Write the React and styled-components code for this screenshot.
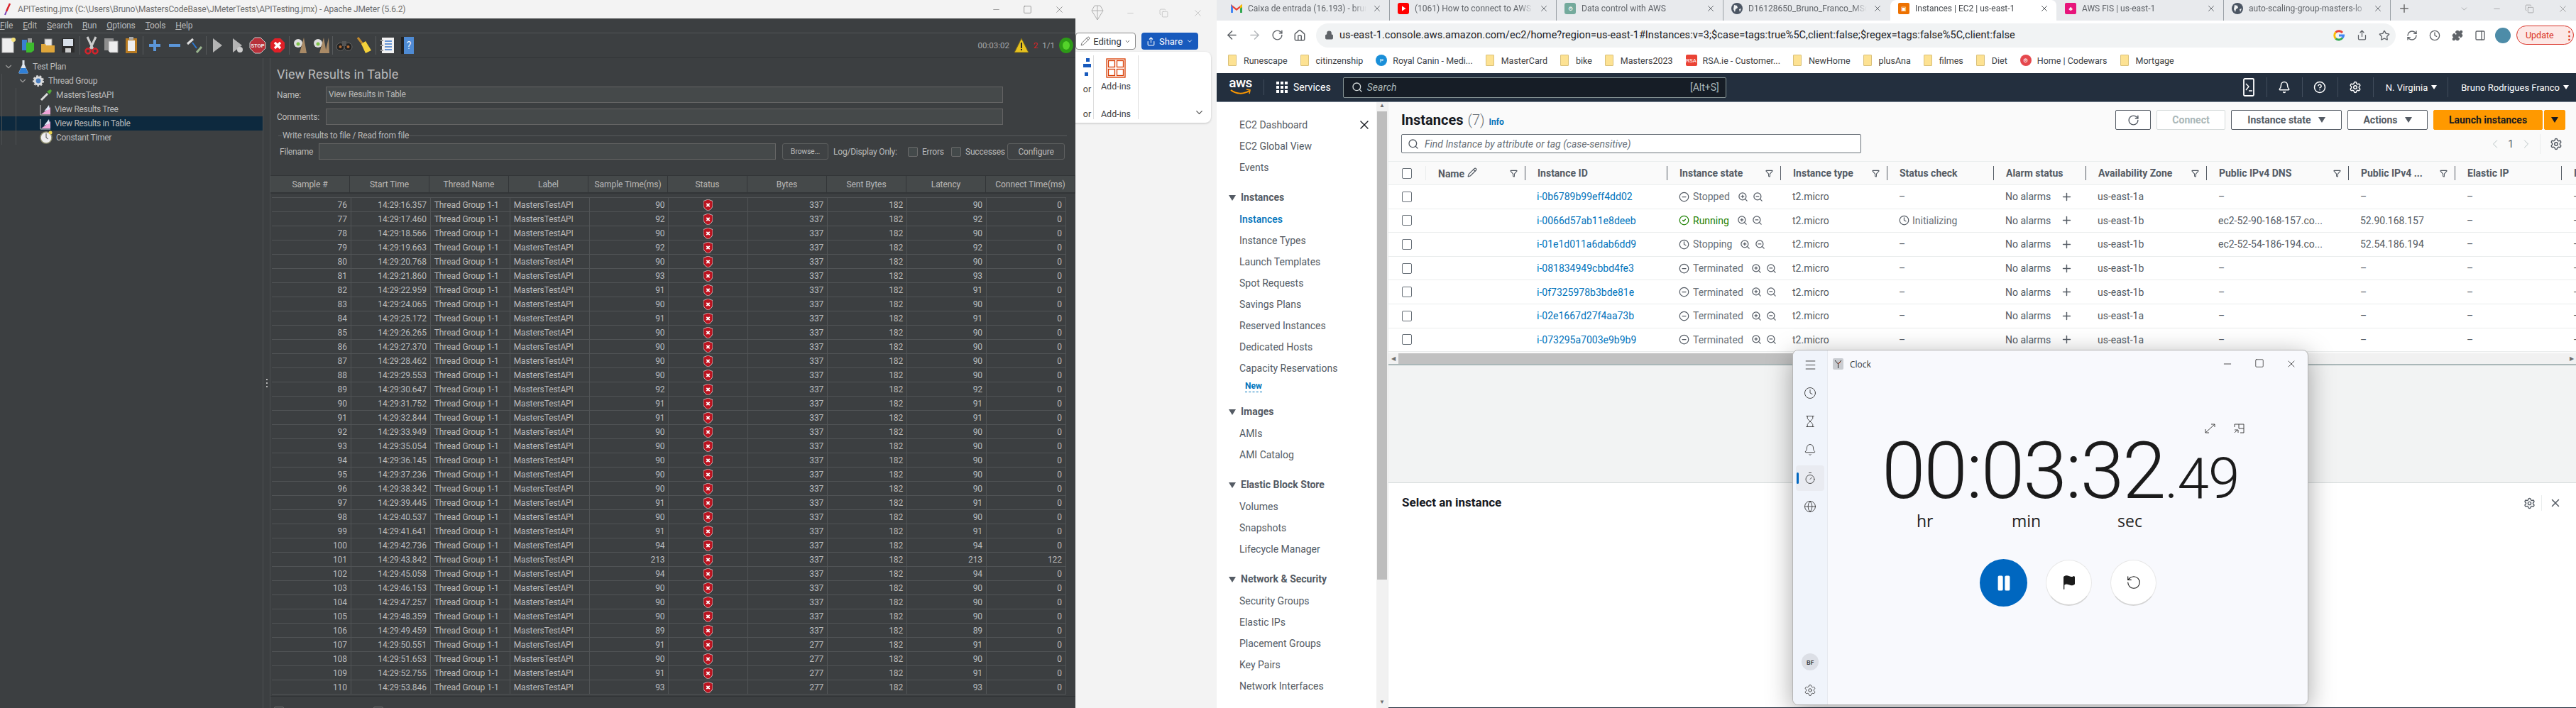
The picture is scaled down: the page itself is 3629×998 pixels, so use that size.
import styled, { createGlobalStyle } from "styled-components";
import {
  ArrowLeft, ArrowRight, RotateCw, House, Lock, Share, Star, Puzzle, Plus, X, Minus, Square,
  ChevronDown, Search, Bell, CircleHelp, Settings, RefreshCw, ChevronLeft, ChevronRight,
  CircleMinus, CircleCheck, Clock, ZoomIn, ZoomOut, Pencil, Menu, Hourglass, Timer, Globe,
  Flag, Pause, RotateCcw, Copy, PanelRight, Filter,
} from "lucide-react";

const GlobalStyle = createGlobalStyle`
  html, body { margin: 0; padding: 0; background: #fff; }
  * { box-sizing: border-box; }
`;

/* ---------- data ---------- */
const samples = [
  ["16.357", 90], ["17.460", 92], ["18.566", 90], ["19.663", 92], ["20.768", 90], ["21.860", 93], ["22.959", 91],
  ["24.065", 90], ["25.172", 91], ["26.265", 90], ["27.370", 90], ["28.462", 90], ["29.553", 90], ["30.647", 92],
  ["31.752", 91], ["32.844", 91], ["33.949", 90], ["35.054", 90], ["36.145", 90], ["37.236", 90], ["38.342", 90],
  ["39.445", 91], ["40.537", 90], ["41.641", 91], ["42.736", 94], ["43.842", 213], ["45.058", 94], ["46.153", 90],
  ["47.257", 90], ["48.359", 90], ["49.459", 89], ["50.551", 91], ["51.653", 90], ["52.755", 91], ["53.846", 93],
];
const jmeterCols = ["Sample #", "Start Time", "Thread Name", "Label", "Sample Time(ms)", "Status", "Bytes", "Sent Bytes", "Latency", "Connect Time(ms)"];
const instances = [
  { id: "i-0b6789b99eff4dd02", state: "Stopped", az: "1a", dns: "–", ip: "–", check: "–" },
  { id: "i-0066d57ab11e8deeb", state: "Running", az: "1b", dns: "ec2-52-90-168-157.co...", ip: "52.90.168.157", check: "Initializing" },
  { id: "i-01e1d011a6dab6dd9", state: "Stopping", az: "1b", dns: "ec2-52-54-186-194.co...", ip: "52.54.186.194", check: "–" },
  { id: "i-081834949cbbd4fe3", state: "Terminated", az: "1b", dns: "–", ip: "–", check: "–" },
  { id: "i-0f7325978b3bde81e", state: "Terminated", az: "1b", dns: "–", ip: "–", check: "–" },
  { id: "i-02e1667d27f4aa73b", state: "Terminated", az: "1a", dns: "–", ip: "–", check: "–" },
  { id: "i-073295a7003e9b9b9", state: "Terminated", az: "1a", dns: "–", ip: "–", check: "–" },
];
const awsCols = "52px 140px 200px 160px 150px 150px 130px 170px 200px 150px 150px 22px";
const navSections = [
  { title: "Instances", items: ["Instances", "Instance Types", "Launch Templates", "Spot Requests", "Savings Plans", "Reserved Instances", "Dedicated Hosts", "Capacity Reservations"] },
  { title: "Images", items: ["AMIs", "AMI Catalog"] },
  { title: "Elastic Block Store", items: ["Volumes", "Snapshots", "Lifecycle Manager"] },
  { title: "Network & Security", items: ["Security Groups", "Elastic IPs", "Placement Groups", "Key Pairs", "Network Interfaces"] },
];

/* ---------- desktop ---------- */
const Desktop = styled.div`
  position: relative;
  width: 3629px;
  height: 998px;
  overflow: hidden;
  background: #f3f3f3;
  font-family: Roboto, "Liberation Sans", sans-serif;
`;
const WindowFrame = styled.div`
  position: absolute;
  left: ${(p) => p.$left}px;
  top: ${(p) => p.$top || 0}px;
  width: ${(p) => p.$width}px;
  height: ${(p) => p.$height || 998}px;
  display: flex;
  flex-direction: column;
  overflow: hidden;
`;

/* ---------- jmeter ---------- */
const JTitleBar = styled.div`
  height: 26px;
  flex: none;
  background: #f3f3f3;
  display: flex;
  align-items: center;
  padding-left: 6px;
  color: #6f6f6f;
  font-size: 12px;
`;
const JTitleText = styled.span`
  margin-left: 9px;
  flex: 1;
  letter-spacing: -0.17px;
`;
const WinControls = styled.div`
  display: flex;
  align-items: center;
  color: ${(p) => p.$color || "#555"};
  gap: ${(p) => p.$gap || 30}px;
  margin-left: ${(p) => p.$push || 0};
  padding-right: ${(p) => p.$right || 16}px;
`;
const JMenuBar = styled.div`
  height: 21px;
  flex: none;
  background: #3c3f41;
  border-bottom: 1px solid #515658;
  display: flex;
  align-items: center;
  gap: 14px;
  color: #bbbbbb;
  font-size: 12px;
  letter-spacing: -0.15px;
`;
const JMenuItem = styled.span`
  display: inline-block;
  &::first-letter { text-decoration: underline; }
`;
const JToolbar = styled.div`
  height: 35px;
  flex: none;
  background: #3c3f41;
  border-bottom: 1px solid #323537;
  display: flex;
  align-items: center;
`;
const ToolSlot = styled.div`
  width: 28px;
  height: 26px;
  display: flex;
  align-items: center;
  justify-content: center;
  flex: none;
  &:first-child { margin-left: -2px; }
`;
const ToolSep = styled.div`
  width: 1px;
  height: 26px;
  margin: 0 2px;
  background: #56595b;
  flex: none;
`;
const JStatus = styled.div`
  margin-left: auto;
  padding-right: 3px;
  display: flex;
  align-items: center;
  gap: 6px;
  font-size: 11.5px;
  color: #a9a9a9;
`;
const JBody = styled.div`
  flex: 1;
  display: flex;
  background: #3c3f41;
  min-height: 0;
  color: #bbbbbb;
  font-size: 12px;
  letter-spacing: -0.2px;
`;
const TreePane = styled.div`
  width: 371px;
  border-right: 1px solid #4d5052;
  padding-top: 2px;
  flex: none;
  letter-spacing: -0.3px;
`;
const TreeRow = styled.div`
  height: 20px;
  display: flex;
  align-items: center;
  gap: 5px;
  padding-left: ${(p) => p.$indent}px;
  background-color: ${(p) => (p.$selected ? "#0d293e" : "transparent")};
  background-image: ${(p) => (p.$guide >= 1 ? "linear-gradient(#4d5052,#4d5052)" : "none")},
    ${(p) => (p.$guide >= 2 ? "linear-gradient(#4d5052,#4d5052)" : "none")};
  background-repeat: no-repeat;
  background-size: 1px 100%;
  background-position: 2px 0, 22px 0;
`;
const TreeChevron = styled.span`
  width: 14px;
  margin-left: -20px;
  margin-right: 1px;
  display: flex;
  color: #9a9a9a;
`;
const Splitter = styled.div`
  width: 9px;
  flex: none;
  display: flex;
  align-items: center;
  justify-content: center;
  &::before {
    content: "";
    width: 2px;
    height: 12px;
    background: repeating-linear-gradient(#b5b5b5 0 2px, transparent 2px 5px);
  }
`;
const DetailPane = styled.div`
  flex: 1;
  min-width: 0;
  border-left: 1px solid #4d5052;
  display: flex;
  flex-direction: column;
  overflow: hidden;
  & > * { flex: none; }
`;
const JHeading = styled.div`
  margin: 13px 0 7px 9px;
  height: 20px;
  line-height: 20px;
  font-size: 18px;
  letter-spacing: 0.1px;
`;
const FormRow = styled.div`
  display: flex;
  align-items: center;
  height: 23px;
  margin: ${(p) => p.$top || 0}px 0 0 ${(p) => p.$left || 9}px;
`;
const FormLabel = styled.span`
  width: ${(p) => p.$width}px;
  padding-left: ${(p) => p.$pad || 0}px;
  flex: none;
`;
const Field = styled.div`
  width: ${(p) => p.$width}px;
  height: 23px;
  flex: none;
  background: #45494a;
  border: 1px solid #646464;
  padding-left: 3px;
  line-height: 21px;
`;
const Legend = styled.div`
  margin: 5px 12px 0 11px;
  height: 20px;
  display: flex;
  align-items: center;
  gap: 1px;
  &::before { content: ""; width: 5px; height: 1px; background: #585b5d; }
  &::after { content: ""; flex: 1; height: 1px; background: #585b5d; }
`;
const SmallButton = styled.div`
  height: 23px;
  width: ${(p) => p.$width}px;
  margin-left: ${(p) => p.$left || 0}px;
  flex: none;
  border: 1px solid #5e6060;
  border-radius: 3px;
  font-size: ${(p) => p.$size || 12}px;
  display: flex;
  align-items: center;
  justify-content: center;
  background: #3f4244;
`;
const CheckBox = styled.span`
  width: 14px;
  height: 14px;
  flex: none;
  border: 1px solid #6b6b6b;
  border-radius: 2px;
  background: #43494a;
  margin: 0 6px 0 ${(p) => p.$left || 0}px;
`;
const JHeadRow = styled.div`
  margin-top: 22px;
  height: 26px;
  display: grid;
  grid-template-columns: repeat(9, 112px) 126px;
  background: #45494a;
  border-top: 1px solid #323537;
  border-bottom: 2px solid #323537;
`;
const JHeadCell = styled.div`
  display: flex;
  align-items: center;
  justify-content: center;
  border-right: 1px solid #323537;
  white-space: nowrap;
  letter-spacing: -0.05px;
`;
const JRows = styled.div`
  margin: 5px 0 0 2px;
  width: 1119px;
  border-top: 1px solid #515456;
`;
const JRow = styled.div`
  height: 20px;
  display: grid;
  grid-template-columns: repeat(10, 111.9px);
  border-bottom: 1px solid #515456;
`;
const JCell = styled.div`
  display: flex;
  align-items: center;
  justify-content: ${(p) => (p.$align === "left" ? "flex-start" : p.$align === "center" ? "center" : "flex-end")};
  padding: 0 5px;
  border-right: 1px solid #515456;
  overflow: hidden;
  white-space: nowrap;
  letter-spacing: -0.1px;
`;
const JFooter = styled.div`
  margin-top: 2px;
  border-top: 1px solid #2f3234;
  padding: 14px 0 0 5px;
  display: flex;
  gap: 120px;
`;

/* ---------- word ---------- */
const WordTop = styled.div`
  height: 36px;
  display: flex;
  align-items: center;
  color: #9a9a9a;
  padding-left: 37px;
  flex: none;
`;
const WordButtons = styled.div`
  height: 24px;
  margin-top: 10px;
  display: flex;
  padding-left: 15px;
  gap: 10px;
  flex: none;
`;
const EditingButton = styled.div`
  width: 85px;
  background: #fff;
  border: 1px solid #8a8a8a;
  border-radius: 4px;
  display: flex;
  align-items: center;
  justify-content: center;
  gap: 4px;
  font-size: 13px;
  color: #333;
`;
const ShareButton = styled.div`
  width: 80px;
  background: #185abd;
  color: #fff;
  border-radius: 4px;
  display: flex;
  align-items: center;
  justify-content: center;
  gap: 5px;
  font-size: 13px;
  margin-left: -2px;
`;
const Ribbon = styled.div`
  margin-top: 3px;
  width: 206px;
  height: 100px;
  flex: none;
  background: #fff;
  border-radius: 8px;
  box-shadow: 0 1px 3px rgba(0, 0, 0, 0.2);
  display: flex;
  position: relative;
  padding: 5px 0;
`;
const RibbonGroup = styled.div`
  width: ${(p) => p.$width}px;
  border-right: 1px solid #ddd;
  display: flex;
  flex-direction: column;
  align-items: center;
  color: #444;
  font-size: 12.5px;
  padding-top: 4px;
  padding-left: ${(p) => p.$pad || 0}px;
`;
const RibbonLabel = styled.span`
  margin-top: ${(p) => p.$top || 4}px;
`;
const RibbonFoot = styled.span`
  margin-top: auto;
`;
const RibbonChevron = styled.span`
  position: absolute;
  right: 9px;
  bottom: 7px;
  color: #555;
  display: flex;
`;

/* ---------- browser ---------- */
const TabStrip = styled.div`
  height: 29px;
  background: #e8eaed;
  display: flex;
  padding-left: 9px;
  flex: none;
  color: #5f6368;
  font-size: 12px;
`;
const Tab = styled.div`
  width: 235px;
  height: 29px;
  flex: none;
  display: grid;
  grid-template-columns: 16px 1fr 16px;
  gap: 8px;
  align-items: center;
  padding: 0 8px 5px 11px;
  border-right: 1px solid ${(p) => (p.$active || p.$noSep ? "transparent" : "#9aa0a6")};
  background: ${(p) => (p.$active ? "#fff" : "transparent")};
  border-radius: ${(p) => (p.$active ? "8px 8px 0 0" : "0")};
  color: ${(p) => (p.$active ? "#45494d" : "#5f6368")};
  background-clip: padding-box;
`;
const TabTitle = styled.span`
  white-space: nowrap;
  overflow: hidden;
  -webkit-mask-image: linear-gradient(90deg, #000 88%, transparent);
  mask-image: linear-gradient(90deg, #000 88%, transparent);
`;
const Favicon = styled.span`
  width: ${(p) => p.$size || 16}px;
  height: ${(p) => p.$size || 16}px;
  border-radius: ${(p) => p.$round || 2}px;
  background: ${(p) => p.$bg || "transparent"};
  display: flex;
  align-items: center;
  justify-content: center;
  color: #fff;
  font-size: 8px;
  flex: none;
`;
const StripControls = styled.div`
  flex: 1;
  display: flex;
  align-items: center;
  padding-bottom: 5px;
  color: #6a6a6a;
`;
const PlusTab = styled(Plus)`
  margin-left: 10px;
`;
const ToolbarRow = styled.div`
  height: 41px;
  background: #fff;
  display: flex;
  align-items: center;
  padding-left: 5px;
  flex: none;
`;
const NavSlot = styled.span`
  width: 32px;
  flex: none;
  display: flex;
  justify-content: center;
  color: ${(p) => p.$color || "#5f6368"};
  margin-left: ${(p) => p.$left || 0}px;
`;
const UrlPill = styled.div`
  margin-left: 7px;
  width: 1521px;
  height: 34px;
  border-radius: 17px;
  background: #f1f3f4;
  display: flex;
  align-items: center;
  padding-left: 12px;
  color: #202124;
  font-size: 14.5px;
  flex: none;
  white-space: nowrap;
`;
const UrlText = styled.span`
  flex: 1;
  margin-left: 8px;
  letter-spacing: 0.05px;
`;
const UpdatePill = styled.div`
  margin-left: 3px;
  width: 81px;
  height: 27px;
  border: 1px solid #d93025;
  background: #fce8e6;
  border-radius: 14px;
  display: flex;
  align-items: center;
  padding-left: 12px;
  color: #d93025;
  font-size: 12.5px;
`;
const UpdateDots = styled.span`
  margin-left: 14px;
  font-weight: 700;
  font-size: 15px;
`;
const Bookmarks = styled.div`
  height: 33px;
  background: #fff;
  display: flex;
  align-items: center;
  gap: 18px;
  padding: 0 0 3px 16px;
  color: #3c4043;
  font-size: 12.5px;
  flex: none;
`;
const Bookmark = styled.span`
  display: flex;
  align-items: center;
  gap: ${(p) => p.$gap || 9}px;
  white-space: nowrap;
`;
const FolderIcon = styled.span`
  width: 12px;
  height: 16px;
  background: #fde293;
  border: 1px solid #d9c07a;
  border-radius: 1px;
  flex: none;
`;
const AwsNav = styled.div`
  height: 41px;
  background: #232f3e;
  border-bottom: 1px solid #7d8998;
  display: flex;
  align-items: center;
  color: #fff;
  font-size: 14px;
  padding-left: 18px;
  flex: none;
`;
const AwsLogo = styled.div`
  width: 31px;
  height: 30px;
  display: flex;
  flex-direction: column;
  align-items: center;
  line-height: 17px;
  font-size: 19px;
  font-weight: 500;
  letter-spacing: -0.5px;
`;
const NavSep = styled.span`
  width: 1px;
  height: 22px;
  background: ${(p) => p.$color || "#414d5c"};
  flex: none;
  margin: ${(p) => p.$margin || "0"};
`;
const ServicesGrid = styled.span`
  width: 16px;
  height: 16px;
  display: grid;
  grid-template-columns: repeat(3, 4px);
  gap: 2px;
  flex: none;
  & > i { background: #fff; }
`;
const ServicesLabel = styled.span`
  margin-left: 8px;
`;
const AwsSearch = styled.div`
  width: 540px;
  height: 29px;
  margin-left: 17px;
  background: #161d26;
  border: 1px solid #879596;
  border-radius: 2px;
  display: flex;
  align-items: center;
  padding: 0 9px 0 11px;
  color: #aab7b8;
`;
const AwsSearchText = styled.span`
  flex: 1;
  margin-left: 6px;
  font-style: italic;
`;
const NavRight = styled.div`
  margin-left: auto;
  display: flex;
  align-items: center;
  padding-right: 10px;
`;
const NavIcon = styled.span`
  width: 50px;
  height: 28px;
  display: flex;
  align-items: center;
  justify-content: center;
  border-right: 1px solid #414d5c;
`;
const NavMenu = styled.span`
  display: flex;
  align-items: center;
  gap: 5px;
  font-size: 13px;
  padding: ${(p) => p.$padding};
  height: 28px;
  border-right: ${(p) => (p.$sep ? "1px solid #414d5c" : "0")};
`;
const Caret = styled.span`
  width: 0;
  height: 0;
  border-left: ${(p) => p.$size || 4}px solid transparent;
  border-right: ${(p) => p.$size || 4}px solid transparent;
  border-top: ${(p) => (p.$size || 4) * 1.6}px solid currentColor;
  flex: none;
`;
const AwsBody = styled.div`
  flex: 1;
  display: flex;
  min-height: 0;
`;
const SideNav = styled.div`
  width: 225px;
  flex: none;
  background: #fff;
  padding: 17px 0 0 32px;
  font-size: 14px;
  color: #545b64;
  overflow: hidden;
`;
const SideItem = styled.div`
  height: 30px;
  line-height: 30px;
  white-space: nowrap;
  color: ${(p) => (p.$active ? "#0073bb" : "#545b64")};
  font-weight: ${(p) => (p.$active ? 500 : 400)};
  display: flex;
  justify-content: space-between;
  align-items: center;
  padding-right: 7px;
`;
const SideSection = styled.div`
  margin-top: 12px;
`;
const SideHead = styled.div`
  height: 31px;
  line-height: 31px;
  font-weight: 700;
  color: #545b64;
  margin-left: -15px;
  display: flex;
  align-items: center;
  gap: 7px;
  white-space: nowrap;
`;
const NewBadge = styled.span`
  display: block;
  width: fit-content;
  margin: 3px 0 10px 8px;
  font-size: 12px;
  font-weight: 700;
  line-height: 14px;
  height: 16px;
  color: #0073bb;
  border-bottom: 1px dashed #0073bb;
`;
const VScroll = styled.div`
  width: 16px;
  flex: none;
  background: #f1f1f1;
  display: flex;
  flex-direction: column;
  align-items: center;
  color: #6e6e6e;
  font-size: 8px;
`;
const VThumb = styled.div`
  width: 14px;
  height: 660px;
  margin-top: 4px;
  background: #bdbdbd;
`;
const VArrowDown = styled.span`
  margin-top: auto;
  margin-bottom: 4px;
`;
const AwsMain = styled.div`
  flex: 1;
  min-width: 0;
  display: flex;
  flex-direction: column;
  background: #fafafa;
  border-left: 1px solid #eaeded;
`;
const HeadRow = styled.div`
  display: flex;
  align-items: center;
  justify-content: space-between;
  height: ${(p) => p.$height}px;
  margin-top: ${(p) => p.$top}px;
  padding: 0 ${(p) => p.$right || 15}px 0 18px;
  flex: none;
`;
const H1 = styled.div`
  font-size: 20px;
  font-weight: 700;
  color: #16191f;
  display: flex;
  align-items: baseline;
  gap: 6px;
`;
const Count = styled.span`
  font-weight: 300;
  color: #687078;
`;
const InfoLink = styled.span`
  font-size: 12px;
  font-weight: 700;
  color: #0073bb;
`;
const ActionRow = styled.div`
  display: flex;
  gap: ${(p) => p.$gap || 8}px;
`;
const ActionButton = styled.div`
  width: ${(p) => p.$width}px;
  height: 28px;
  display: flex;
  align-items: center;
  justify-content: center;
  gap: 10px;
  font-size: 14px;
  font-weight: 700;
  color: ${(p) => (p.$disabled ? "#aab7b8" : p.$orange ? "#16191f" : "#545b64")};
  background: ${(p) => (p.$orange ? "#ff9900" : "#fff")};
  border: 1px solid ${(p) => (p.$disabled ? "#d5dbdb" : p.$orange ? "#ff9900" : "#545b64")};
  border-radius: 2px;
`;
const FilterBox = styled.div`
  width: 648px;
  height: 27px;
  background: #fff;
  border: 1px solid #687078;
  border-radius: 2px;
  display: flex;
  align-items: center;
  padding-left: 8px;
  gap: 8px;
  font-size: 14px;
  font-style: italic;
  color: #687078;
`;
const Pager = styled.div`
  display: flex;
  align-items: center;
  color: #545b64;
  font-size: 14px;
`;
const PageNumber = styled.span`
  margin: 0 8px;
`;
const PagerSep = styled.span`
  width: 1px;
  height: 28px;
  background: #eaeded;
  margin: 0 13px 0 9px;
`;
const TableHead = styled.div`
  margin-top: 11px;
  height: 34px;
  display: grid;
  grid-template-columns: ${awsCols};
  align-items: center;
  border-top: 1px solid #eaeded;
  border-bottom: 1px solid #eaeded;
  font-size: 14px;
  font-weight: 700;
  color: #545b64;
  flex: none;
`;
const HeadCell = styled.div`
  height: 20px;
  display: flex;
  align-items: center;
  justify-content: space-between;
  padding: 0 10px 0 17px;
  border-left: 1px solid ${(p) => (p.$first ? "#eaeded" : "#545b64")};
  white-space: nowrap;
  overflow: hidden;
`;
const CheckCell = styled.div`
  padding-left: 19px;
  display: flex;
  align-items: center;
`;
const AwsCheck = styled.span`
  width: 14px;
  height: 15px;
  background: #fff;
  border: 1px solid #687078;
  border-radius: 2px;
`;
const BodyRow = styled.div`
  height: 33.6px;
  background: #fff;
  display: grid;
  grid-template-columns: ${awsCols};
  align-items: center;
  border-bottom: 1px solid #eaeded;
  font-size: 14px;
  color: #545b64;
  flex: none;
`;
const BodyCell = styled.div`
  padding-left: 17px;
  display: flex;
  align-items: center;
  white-space: nowrap;
  overflow: hidden;
  gap: ${(p) => p.$gap || 0}px;
`;
const IdLink = styled.span`
  color: #0073bb;
`;
const StateLabel = styled.span`
  color: ${(p) => (p.$state === "Running" ? "#1d8102" : "#687078")};
  margin: 0 5px 0 -1px;
`;
const CheckLabel = styled.span`
  color: ${(p) => (p.$muted ? "#687078" : "#545b64")};
`;
const HScroll = styled.div`
  height: 15px;
  margin-top: 2px;
  background: #f1f1f1;
  display: flex;
  align-items: center;
  color: #6e6e6e;
  font-size: 8px;
  padding-left: 4px;
  gap: 4px;
  flex: none;
`;
const HThumb = styled.div`
  width: 1270px;
  height: 15px;
  background: #c1c1c1;
`;
const HArrowRight = styled.span`
  margin-left: auto;
  margin-right: 3px;
`;
const GrayZone = styled.div`
  height: 168px;
  background: #f2f3f3;
  border-top: 2px solid #aab7b8;
  border-bottom: 1px solid #d5dbdb;
  flex: none;
`;
const DetailZone = styled.div`
  flex: 1;
  background: #fff;
  display: flex;
  justify-content: space-between;
  padding: 16px 20px 0 19px;
`;
const SelectTitle = styled.div`
  font-size: 17px;
  font-weight: 700;
  color: #16191f;
  line-height: 22px;
`;
const DetailTools = styled.div`
  display: flex;
  align-items: center;
  height: 24px;
  color: #545b64;
`;
const BottomEdge = styled.div`
  height: 1px;
  background: #232f3e;
  flex: none;
`;

/* ---------- clock ---------- */
const ClockFrame = styled(WindowFrame)`
  flex-direction: row;
  background: #f8f9fd;
  border: 1px solid #b4b4b4;
  border-radius: 8px;
  box-shadow: 0 8px 36px rgba(0, 0, 0, 0.35);
  overflow: visible;
  font-family: "Open Sans", "Noto Sans", sans-serif;
`;
const Rail = styled.div`
  width: 49px;
  flex: none;
  background: #f0f4fb;
  border-right: 1px solid #e6e9f0;
  border-radius: 8px 0 0 8px;
  display: flex;
  flex-direction: column;
  align-items: center;
  color: #3a3a3a;
`;
const RailItem = styled.div`
  width: 40px;
  height: ${(p) => (p.$active ? 36 : 40)}px;
  margin: ${(p) => (p.$active ? "2px 0" : "0")};
  display: flex;
  align-items: center;
  justify-content: center;
  position: relative;
  border-radius: 4px;
  background: ${(p) => (p.$active ? "#e9ebf1" : "transparent")};
  &::before {
    content: "";
    display: ${(p) => (p.$active ? "block" : "none")};
    position: absolute;
    left: 1px;
    top: 10px;
    width: 3px;
    height: 16px;
    border-radius: 2px;
    background: #0067c0;
  }
`;
const RailSpacer = styled.div`
  flex: 1;
`;
const Avatar = styled.div`
  width: 24px;
  height: 24px;
  border-radius: 50%;
  background: #dcdfe6;
  font-size: 9px;
  font-weight: 600;
  display: flex;
  align-items: center;
  justify-content: center;
  color: #333;
`;
const ClockMain = styled.div`
  flex: 1;
  min-width: 0;
  display: flex;
  flex-direction: column;
`;
const ClockHead = styled.div`
  height: 38px;
  display: flex;
  align-items: center;
  padding-left: 7px;
  gap: 9px;
  font-size: 12px;
  color: #333;
`;
const ClockHeadControls = styled.div`
  margin-left: auto;
  display: flex;
  gap: 30px;
  padding-right: 15px;
  color: #222;
`;
const ExpandRow = styled.div`
  height: 22px;
  margin-top: 65px;
  display: flex;
  justify-content: flex-end;
  gap: 26px;
  padding-right: 89px;
  color: #444;
`;
const TimeRow = styled.div`
  margin-top: 5px;
  height: 80px;
  line-height: 80px;
  padding-left: 76px;
  display: flex;
  align-items: baseline;
  color: #1b1b1b;
  white-space: nowrap;
`;
const TimeMain = styled.span`
  font-family: Roboto, sans-serif;
  font-weight: 300;
  font-size: 111px;
  letter-spacing: -2.2px;
`;
const TimeFrac = styled.span`
  font-family: Roboto, sans-serif;
  font-weight: 300;
  font-size: 80px;
  letter-spacing: -1px;
`;
const UnitRow = styled.div`
  margin-top: 18px;
  display: grid;
  grid-template-columns: 134px 149px auto;
  padding-left: 125px;
  font-size: 23px;
  line-height: 24px;
  color: #222;
`;
const ControlRow = styled.div`
  margin-top: 42px;
  display: flex;
  align-items: center;
  gap: 26px;
  padding-left: 214px;
`;
const RoundButton = styled.div`
  width: ${(p) => (p.$primary ? 67 : 65)}px;
  height: ${(p) => (p.$primary ? 67 : 65)}px;
  border-radius: 50%;
  background: ${(p) => (p.$primary ? "#0067c0" : "#fff")};
  border: ${(p) => (p.$primary ? "0" : "1px solid #e8e8e8")};
  border-bottom: ${(p) => (p.$primary ? "0" : "2px solid #d5d5d5")};
  color: ${(p) => (p.$primary ? "#fff" : "#1b1b1b")};
  display: flex;
  align-items: center;
  justify-content: center;
`;
const StatusRed = styled.span`
  color: #e02020;
`;

/* ---------- drawn icons ---------- */
const NewIcon = () => (
  <svg width="22" height="24" viewBox="0 0 22 24"><rect x="2" y="2" width="16" height="20" fill="#eee" stroke="#bbb" /><circle cx="18" cy="4" r="3" fill="#f5e27a" /></svg>
);
const TemplatesIcon = () => (
  <svg width="22" height="24" viewBox="0 0 22 24"><rect x="2" y="4" width="7" height="15" fill="#3a7fd0" /><rect x="10" y="2" width="6" height="10" fill="#9a9a9a" /><path d="M8 8h11v11l-4 3H8z" fill="#3dbb2e" /></svg>
);
const OpenIcon = () => (
  <svg width="22" height="24" viewBox="0 0 22 24"><rect x="6" y="3" width="10" height="10" fill="#e8e8e8" stroke="#999" /><path d="M1 10h6l1 2h12v9a1 1 0 0 1-1 1H2a1 1 0 0 1-1-1z" fill="#dfa63a" /></svg>
);
const SaveIcon = () => (
  <svg width="22" height="24" viewBox="0 0 22 24"><rect x="2" y="2" width="18" height="20" fill="#2b2b2b" /><rect x="4" y="3" width="14" height="10" fill="#d8dfe8" /><rect x="7" y="16" width="8" height="6" fill="#ccc" /></svg>
);
const CutIcon = () => (
  <svg width="22" height="26" viewBox="0 0 22 26"><path d="M5 1l8 17M17 1l-8 17" stroke="#ccc" strokeWidth="3" /><circle cx="6" cy="21" r="3.5" fill="none" stroke="#d6232b" strokeWidth="2.4" /><circle cx="16" cy="21" r="3.5" fill="none" stroke="#d6232b" strokeWidth="2.4" /></svg>
);
const CopyIcon = () => (
  <svg width="22" height="24" viewBox="0 0 22 24"><rect x="1" y="2" width="13" height="17" fill="#8d8d8d" /><path d="M7 6h13v16H9l-2-2z" fill="#eee" stroke="#999" /></svg>
);
const PasteIcon = () => (
  <svg width="22" height="26" viewBox="0 0 22 26"><rect x="3" y="3" width="16" height="21" fill="#b87b22" /><rect x="6" y="6" width="10" height="15" fill="#eee" /><rect x="8" y="1" width="6" height="4" fill="#aaa" /></svg>
);
const SignIcon = ({ minus }) => (
  <svg width="20" height="20" viewBox="0 0 20 20"><rect x="2" y="8" width="16" height="4" fill="#5b96d9" />{!minus && <rect x="8" y="2" width="4" height="16" fill="#5b96d9" />}</svg>
);
const ToggleIcon = () => (
  <svg width="24" height="24" viewBox="0 0 24 24"><path d="M2 10l8-7" stroke="#ddd" strokeWidth="3" /><path d="M9 8l6 8" stroke="#2d78d0" strokeWidth="2" /><path d="M15 22l7-8" stroke="#9ab58f" strokeWidth="3" /></svg>
);
const PlayIcon = ({ timer }) => (
  <svg width="20" height="24" viewBox="0 0 20 24"><path d="M3 2l13 10L3 22z" fill="#b4b4b4" />{timer && <circle cx="13" cy="18" r="4" fill="#ccc" />}</svg>
);
const StopIcon = () => (
  <svg width="24" height="24" viewBox="0 0 24 24"><path d="M8 1h8l7 7v8l-7 7H8l-7-7V8z" fill="#b7303a" stroke="#ccc" /><text x="12" y="15" fontSize="7.5" fontWeight="700" fontFamily="Roboto" textAnchor="middle" fill="#eee">STOP</text></svg>
);
const ShutIcon = () => (
  <svg width="22" height="24" viewBox="0 0 22 24"><path d="M7 2h8l6 6v8l-6 6H7l-6-6V8z" fill="#e02028" /><path d="M7 8l8 8M15 8l-8 8" stroke="#fff" strokeWidth="3.4" /></svg>
);
const BroomIcon = ({ big }) => (
  <svg width="26" height="24" viewBox="0 0 26 24">
    <circle cx="9" cy="9" r="6" fill="#ddd" />
    <circle cx="9" cy="10" r="2.5" fill="#7fc24a" />
    <path d="M17 1l-6 22h10z" fill="#a98a66" />
    {big && <path d="M24 1l-5 22h6z" fill="#a98a66" />}
  </svg>
);
const BinocularIcon = () => (
  <svg width="24" height="22" viewBox="0 0 24 22"><circle cx="6.5" cy="13" r="5.5" fill="#222" stroke="#666" /><circle cx="17.5" cy="13" r="5.5" fill="#222" stroke="#666" /><rect x="9" y="5" width="6" height="7" fill="#555" /><circle cx="6.5" cy="13" r="2" fill="#b06a35" /><circle cx="17.5" cy="13" r="2" fill="#b06a35" /></svg>
);
const SweepIcon = () => (
  <svg width="24" height="26" viewBox="0 0 24 26"><path d="M3 2l7 9" stroke="#c18a2d" strokeWidth="3" /><path d="M8 11l6-4 8 13-8 4z" fill="#f5d23a" /></svg>
);
const FuncIcon = () => (
  <svg width="22" height="24" viewBox="0 0 22 24"><rect x="3" y="1" width="17" height="22" fill="#f2f2f2" /><path d="M7 6h10M7 10h10M7 14h10M7 18h10" stroke="#3a77c9" strokeWidth="1.6" /><path d="M1 5h4M1 12h4M1 19h4" stroke="#999" strokeWidth="2" /></svg>
);
const HelpBookIcon = () => (
  <svg width="20" height="26" viewBox="0 0 20 26"><rect x="1" y="1" width="4" height="24" fill="#222" /><rect x="5" y="1" width="14" height="24" fill="#4f8bd4" /><text x="12" y="18" fontSize="14" fill="#e8eefc" textAnchor="middle" fontFamily="Roboto">?</text></svg>
);
const WarnIcon = () => (
  <svg width="22" height="22" viewBox="0 0 22 22"><path d="M11 1l10 20H1z" fill="#e7c21e" stroke="#6d6020" /><rect x="10" y="7" width="2" height="8" fill="#222" /><rect x="10" y="16" width="2" height="2" fill="#222" /></svg>
);
const GreenDot = () => (
  <svg width="20" height="22" viewBox="0 0 20 22"><ellipse cx="10" cy="11" rx="10" ry="11" fill="#2d9a17" /><ellipse cx="10" cy="11" rx="5" ry="6" fill="#54d22a" /></svg>
);
const FlaskIcon = () => (
  <svg width="16" height="20" viewBox="0 0 16 20"><path d="M6.5 1h3v6l5 11a1 1 0 0 1-1 1.4H2.5a1 1 0 0 1-1-1.4l5-11z" fill="#dfe6ee" /><path d="M4.5 12h7l3 6.5a1 1 0 0 1-1 1H2.5a1 1 0 0 1-1-1z" fill="#2f7fd6" /></svg>
);
const GearIcon = () => (
  <svg width="18" height="20" viewBox="0 0 18 20"><circle cx="9" cy="10" r="6.5" fill="#d6d6d6" stroke="#d6d6d6" strokeWidth="3" strokeDasharray="2.5 2" /><circle cx="9" cy="10" r="6" fill="#dcdcdc" /><circle cx="9" cy="10" r="3.4" fill="#4b7fc0" /></svg>
);
const PipetteIcon = () => (
  <svg width="18" height="18" viewBox="0 0 18 18"><path d="M11 7L2 16" stroke="#dcdcdc" strokeWidth="3" /><path d="M10 4l4 4 3-5-2-2z" fill="#52a93a" /></svg>
);
const GraphIcon = () => (
  <svg width="16" height="18" viewBox="0 0 16 18"><path d="M1 3v14h14" stroke="#ccc" fill="none" /><path d="M2 16l7-5 6-5v10z" fill="#f0a5d8" /><path d="M6 12l7-9 1 6z" fill="#dfe7f7" /></svg>
);
const TimerIcon = () => (
  <svg width="18" height="20" viewBox="0 0 18 20"><circle cx="9" cy="10" r="8" fill="#eee" stroke="#8e8e6e" strokeWidth="1.5" /><path d="M9 10V4M9 10l3 2" stroke="#444" /><circle cx="15" cy="3" r="2.5" fill="#e8d24f" /></svg>
);
const FailShield = () => (
  <svg width="13" height="16" viewBox="0 0 13 16"><path d="M6.5 0L13 2.5V8c0 4-3 6.7-6.5 8C3 14.7 0 12 0 8V2.5z" fill="#bb1420" stroke="#d0d0d0" strokeWidth="0.8" /><path d="M4.3 5.8l4.4 4.4M8.7 5.8l-4.4 4.4" stroke="#fff" strokeWidth="1.7" /></svg>
);
const FeatherIcon = () => (
  <svg width="10" height="18" viewBox="0 0 10 18"><path d="M8 1L3 12" stroke="#d8232a" strokeWidth="2.5" /><path d="M3 12l-2 5" stroke="#7a3fb5" strokeWidth="2" /></svg>
);
const DiamondIcon = () => (
  <svg width="18" height="24" viewBox="0 0 18 24" fill="none" stroke="#b0b0b0"><path d="M5 2h8l4 7-8 13L1 9zM1 9h16M9 2v20" /></svg>
);
const AddInsIcon = () => (
  <svg width="28" height="28" viewBox="0 0 28 28" fill="none" stroke="#d83b01" strokeWidth="1.3"><rect x="1" y="1" width="26" height="26" /><rect x="3.5" y="3.5" width="9" height="9" /><rect x="15.5" y="3.5" width="9" height="9" /><rect x="3.5" y="15.5" width="9" height="9" /><rect x="15.5" y="15.5" width="9" height="9" /></svg>
);
const RibbonPiece = () => (
  <svg width="11" height="26" viewBox="0 0 11 26" fill="#185abd"><rect x="4" y="0" width="5" height="5" /><rect x="0" y="8" width="11" height="5" /><rect x="2" y="20" width="5" height="5" /></svg>
);
const GmailIcon = () => (
  <svg width="16" height="14" viewBox="0 0 16 14"><path d="M0 1l8 6 8-6v12h-3V6L8 10 3 6v7H0z" fill="#ea4335" /><path d="M0 1v12h3V6z" fill="#4285f4" /><path d="M16 1v12h-3V6z" fill="#34a853" /><path d="M13 3l3-2v4l-3 2z" fill="#fbbc04" /></svg>
);
const YoutubeIcon = () => (
  <svg width="16" height="16" viewBox="0 0 16 16"><rect width="16" height="16" rx="3" fill="#f00" /><path d="M6 4.5l5.5 3.5L6 11.5z" fill="#fff" /></svg>
);
const GlobeFav = () => (
  <svg width="16" height="16" viewBox="0 0 16 16"><circle cx="8" cy="8" r="8" fill="#4b5563" /><path d="M4 3l4 1 1 3-3 2-1 4-2-4zM11 9l3-1-2 5z" fill="#f1f3f4" /></svg>
);
const GoogleG = () => (
  <svg width="16" height="16" viewBox="0 0 16 16" fill="none" strokeWidth="3"><path d="M13 4a6.5 6.5 0 0 0-9.5-.4" stroke="#ea4335" /><path d="M3.5 3.6a6.5 6.5 0 0 0 0 8.8" stroke="#fbbc04" /><path d="M3.5 12.4a6.5 6.5 0 0 0 9.5-1" stroke="#34a853" /><path d="M8 8h6.5a6.5 6.5 0 0 1-1.5 3.4" stroke="#4285f4" /></svg>
);
const AwsSmile = () => (
  <svg width="31" height="9" viewBox="0 0 31 9" fill="none" stroke="#ff9900" strokeWidth="2"><path d="M2 2c8 6 18 6 26 1" /><path d="M24 1l5 1-1 5" strokeWidth="1.6" /></svg>
);
const ShellIcon = () => (
  <svg width="16" height="26" viewBox="0 0 16 26" fill="none" stroke="#fff" strokeWidth="1.8"><rect x="1" y="1" width="14" height="24" rx="1.5" /><path d="M4 8l4 4-4 5M8 18h5" strokeWidth="1.4" /></svg>
);
const ExpandIcon = () => (
  <svg width="15" height="14" viewBox="0 0 15 14" fill="none" stroke="currentColor"><path d="M1 13L14 1M9 1h5v4M1 8v5h5" /></svg>
);
const PipIcon = () => (
  <svg width="15" height="14" viewBox="0 0 15 14" fill="none" stroke="currentColor"><path d="M1 5V1h13v12H9M7 1v6h7M1 9h5v4M1 13l4-4" /></svg>
);
const ClockApp = () => (
  <svg width="15" height="16" viewBox="0 0 15 16"><rect width="15" height="16" rx="2" fill="#c9ccd1" /><path d="M3 3l4.5 5L12 3M7.5 8v6" stroke="#222" fill="none" /><path d="M7.5 8L11 5" stroke="#d84a1f" /></svg>
);

const toolGroups = [
  [<NewIcon />, <TemplatesIcon />, <OpenIcon />, <SaveIcon />],
  [<CutIcon />, <CopyIcon />, <PasteIcon />],
  [<SignIcon />, <SignIcon minus />, <ToggleIcon />],
  [<PlayIcon />, <PlayIcon timer />, <StopIcon />, <ShutIcon />],
  [<BroomIcon />, <BroomIcon big />],
  [<BinocularIcon />, <SweepIcon />],
  [<FuncIcon />, <HelpBookIcon />],
];

const bookmarks = [
  ["folder", "Runescape"], ["folder", "citinzenship"], ["royal", "Royal Canin - Medi..."], ["folder", "MasterCard"],
  ["folder", "bike"], ["folder", "Masters2023"], ["rsa", "RSA.ie - Customer..."], ["folder", "NewHome"],
  ["folder", "plusAna"], ["folder", "filmes"], ["folder", "Diet"], ["code", "Home | Codewars"], ["folder", "Mortgage"],
];

const tabs = [
  { title: "Caixa de entrada (16.193) - brun", icon: <Favicon><GmailIcon /></Favicon> },
  { title: "(1061) How to connect to AWS", icon: <Favicon><YoutubeIcon /></Favicon> },
  { title: "Data control with AWS", icon: <Favicon $bg="#74aa9c" $round={3}>⚙</Favicon> },
  { title: "D16128650_Bruno_Franco_MSc", icon: <Favicon><GlobeFav /></Favicon>, noSep: true },
  { title: "Instances | EC2 | us-east-1", icon: <Favicon $bg="#ed7100">▣</Favicon>, active: true },
  { title: "AWS FIS | us-east-1", icon: <Favicon $bg="#e7157b">♣</Favicon> },
  { title: "auto-scaling-group-masters-lo", icon: <Favicon><GlobeFav /></Favicon> },
];

function JMeterWindow() {
  return (
    <WindowFrame $left={0} $width={1515}>
      <JTitleBar>
        <FeatherIcon />
        <JTitleText>APITesting.jmx (C:\Users\Bruno\MastersCodeBase\JMeterTests\APITesting.jmx) - Apache JMeter (5.6.2)</JTitleText>
        <WinControls $gap={31} $right={15}>
          <Minus size={13} strokeWidth={1} />
          <Square size={13} strokeWidth={1} />
          <X size={15} strokeWidth={1} />
        </WinControls>
      </JTitleBar>
      <JMenuBar>
        {["File", "Edit", "Search", "Run", "Options", "Tools", "Help"].map((m) => (
          <JMenuItem key={m}>{m}</JMenuItem>
        ))}
      </JMenuBar>
      <JToolbar>
        {toolGroups.map((group, i) => [
          i > 0 && <ToolSep key={`s${i}`} />,
          ...group.map((icon, k) => <ToolSlot key={`${i}-${k}`}>{icon}</ToolSlot>),
        ])}
        <JStatus>
          <span>00:03:02</span>
          <WarnIcon />
          <StatusRed>2</StatusRed>
          <span>1/1</span>
          <GreenDot />
        </JStatus>
      </JToolbar>
      <JBody>
        <TreePane>
          <TreeRow $indent={25}><TreeChevron><ChevronDown size={14} /></TreeChevron><FlaskIcon /><span>Test Plan</span></TreeRow>
          <TreeRow $indent={45} $guide={1}><TreeChevron><ChevronDown size={14} /></TreeChevron><GearIcon /><span>Thread Group</span></TreeRow>
          <TreeRow $indent={56} $guide={2}><PipetteIcon /><span>MastersTestAPI</span></TreeRow>
          <TreeRow $indent={56} $guide={2}><GraphIcon /><span>View Results Tree</span></TreeRow>
          <TreeRow $indent={56} $guide={2} $selected><GraphIcon /><span>View Results in Table</span></TreeRow>
          <TreeRow $indent={56} $guide={2}><TimerIcon /><span>Constant Timer</span></TreeRow>
        </TreePane>
        <Splitter />
        <DetailPane>
          <JHeading>View Results in Table</JHeading>
          <FormRow>
            <FormLabel $width={69}>Name:</FormLabel>
            <Field $width={954}>View Results in Table</Field>
          </FormRow>
          <FormRow $top={8}>
            <FormLabel $width={69}>Comments:</FormLabel>
            <Field $width={954} />
          </FormRow>
          <Legend>Write results to file / Read from file</Legend>
          <FormRow $top={1} $left={13}>
            <FormLabel $width={55}>Filename</FormLabel>
            <Field $width={644} />
            <SmallButton $width={65} $left={9} $size={10.5}>Browse...</SmallButton>
            <FormLabel $width={112} $pad={7}>Log/Display Only:</FormLabel>
            <CheckBox />
            <FormLabel $width={41}>Errors</FormLabel>
            <CheckBox />
            <FormLabel $width={59}>Successes</FormLabel>
            <SmallButton $width={81}>Configure</SmallButton>
          </FormRow>
          <JHeadRow>
            {jmeterCols.map((c) => <JHeadCell key={c}>{c}</JHeadCell>)}
          </JHeadRow>
          <JRows>
            {samples.map(([t, ms], i) => {
              const n = 76 + i;
              return (
                <JRow key={n}>
                  <JCell>{n}</JCell>
                  <JCell>14:29:{t}</JCell>
                  <JCell $align="left">Thread Group 1-1</JCell>
                  <JCell $align="left">MastersTestAPI</JCell>
                  <JCell>{ms}</JCell>
                  <JCell $align="center"><FailShield /></JCell>
                  <JCell>{n > 106 ? 277 : 337}</JCell>
                  <JCell>182</JCell>
                  <JCell>{ms}</JCell>
                  <JCell>{n === 101 ? 122 : 0}</JCell>
                </JRow>
              );
            })}
          </JRows>
          <JFooter>
            <CheckBox />
            <CheckBox />
          </JFooter>
        </DetailPane>
      </JBody>
    </WindowFrame>
  );
}

function WordWindow() {
  return (
    <WindowFrame $left={1500} $width={214}>
      <WordTop>
        <DiamondIcon />
        <WinControls $color="#a8a8a8" $gap={34} $right={16} $push="31px">
          <Minus size={13} strokeWidth={1} />
          <Copy size={13} strokeWidth={1} />
          <X size={15} strokeWidth={1} />
        </WinControls>
      </WordTop>
      <WordButtons>
        <EditingButton><Pencil size={14} strokeWidth={1.2} />Editing<ChevronDown size={9} /></EditingButton>
        <ShareButton><Share size={13} />Share<ChevronDown size={10} /></ShareButton>
      </WordButtons>
      <Ribbon>
        <RibbonGroup $width={41} $pad={23}><RibbonPiece /><RibbonLabel $top={10}>or</RibbonLabel><RibbonFoot>or</RibbonFoot></RibbonGroup>
        <RibbonGroup $width={63}><AddInsIcon /><RibbonLabel>Add-ins</RibbonLabel><RibbonFoot>Add-ins</RibbonFoot></RibbonGroup>
        <RibbonChevron><ChevronDown size={15} /></RibbonChevron>
      </Ribbon>
    </WindowFrame>
  );
}

function BrowserWindow() {
  return (
    <WindowFrame $left={1714} $width={1915}>
      <TabStrip>
        {tabs.map((t) => (
          <Tab key={t.title} $active={t.active} $noSep={t.noSep}>
            {t.icon}
            <TabTitle>{t.title}</TabTitle>
            <X size={14} strokeWidth={1.6} />
          </Tab>
        ))}
        <StripControls>
          <PlusTab size={18} />
          <WinControls $color="#777" $gap={33} $right={11} $push="auto">
            <ChevronDown size={13} strokeWidth={1} />
            <Minus size={13} strokeWidth={1} />
            <Copy size={13} strokeWidth={1} />
            <X size={15} strokeWidth={1} />
          </WinControls>
        </StripControls>
      </TabStrip>
      <ToolbarRow>
        <NavSlot><ArrowLeft size={19} /></NavSlot>
        <NavSlot $color="#b5b8bc"><ArrowRight size={19} /></NavSlot>
        <NavSlot><RotateCw size={17} /></NavSlot>
        <NavSlot><House size={18} /></NavSlot>
        <UrlPill>
          <Lock size={13} color="#5f6368" fill="#5f6368" />
          <UrlText>us-east-1.console.aws.amazon.com/ec2/home?region=us-east-1#Instances:v=3;$case=tags:true%5C,client:false;$regex=tags:false%5C,client:false</UrlText>
          <NavSlot><GoogleG /></NavSlot>
          <NavSlot><Share size={15} /></NavSlot>
          <NavSlot><Star size={16} /></NavSlot>
        </UrlPill>
        <NavSlot $left={7}><RefreshCw size={16} /></NavSlot>
        <NavSlot><Clock size={16} /></NavSlot>
        <NavSlot><Puzzle size={16} fill="#5f6368" /></NavSlot>
        <NavSlot><PanelRight size={16} /></NavSlot>
        <NavSlot><Favicon $bg="#4d8ca8" $round={11} $size={22} /></NavSlot>
        <UpdatePill>Update<UpdateDots>⋮</UpdateDots></UpdatePill>
      </ToolbarRow>
      <Bookmarks>
        {bookmarks.map(([kind, name]) => (
          <Bookmark key={name} $gap={kind === "folder" ? 10 : 8}>
            {kind === "folder" && <FolderIcon />}
            {kind === "royal" && <Favicon $bg="#1a8fd8" $round={8}>P</Favicon>}
            {kind === "rsa" && <Favicon $bg="#ea4335">RSA</Favicon>}
            {kind === "code" && <Favicon $bg="#e5484d" $round={8}>⚙</Favicon>}
            {name}
          </Bookmark>
        ))}
      </Bookmarks>
      <AwsNav>
        <AwsLogo>aws<AwsSmile /></AwsLogo>
        <NavSep $margin="0 17px 0 17px" />
        <ServicesGrid>{Array.from({ length: 9 }, (_, i) => <i key={i} />)}</ServicesGrid>
        <ServicesLabel>Services</ServicesLabel>
        <AwsSearch>
          <Search size={16} color="#d5dbdb" />
          <AwsSearchText>Search</AwsSearchText>
          <span>[Alt+S]</span>
        </AwsSearch>
        <NavRight>
          <NavIcon><ShellIcon /></NavIcon>
          <NavIcon><Bell size={18} /></NavIcon>
          <NavIcon><CircleHelp size={18} /></NavIcon>
          <NavIcon><Settings size={18} /></NavIcon>
          <NavMenu $padding="0 15px 0 17px" $sep>N. Virginia<Caret /></NavMenu>
          <NavMenu $padding="0 0 0 18px">Bruno Rodrigues Franco<Caret /></NavMenu>
        </NavRight>
      </AwsNav>
      <AwsBody>
        <SideNav>
          <SideItem>EC2 Dashboard<X size={20} strokeWidth={1.6} color="#16191f" /></SideItem>
          <SideItem>EC2 Global View</SideItem>
          <SideItem>Events</SideItem>
          {navSections.map((s) => (
            <SideSection key={s.title}>
              <SideHead><Caret $size={5} />{s.title}</SideHead>
              {s.items.map((item, i) => (
                <SideItem key={item} $active={s.title === "Instances" && i === 0}>{item}</SideItem>
              ))}
              {s.title === "Instances" && <NewBadge>New</NewBadge>}
            </SideSection>
          ))}
        </SideNav>
        <VScroll>
          ▲
          <VThumb />
          <VArrowDown>▼</VArrowDown>
        </VScroll>
        <AwsMain>
          <HeadRow $height={28} $top={11}>
            <H1>Instances <Count>(7)</Count> <InfoLink>Info</InfoLink></H1>
            <ActionRow>
              <ActionButton $width={50}><RotateCw size={17} /></ActionButton>
              <ActionButton $width={97} $disabled>Connect</ActionButton>
              <ActionButton $width={156}>Instance state<Caret $size={5} /></ActionButton>
              <ActionButton $width={113}>Actions<Caret $size={5} /></ActionButton>
              <ActionRow $gap={2}>
                <ActionButton $width={154} $orange>Launch instances</ActionButton>
                <ActionButton $width={30} $orange><Caret $size={5} /></ActionButton>
              </ActionRow>
            </ActionRow>
          </HeadRow>
          <HeadRow $height={27} $top={6} $right={19}>
            <FilterBox><Search size={16} color="#545b64" />Find Instance by attribute or tag (case-sensitive)</FilterBox>
            <Pager>
              <ChevronLeft size={20} strokeWidth={1} color="#aab7b8" />
              <PageNumber>1</PageNumber>
              <ChevronRight size={20} strokeWidth={1} color="#aab7b8" />
              <PagerSep />
              <Settings size={18} />
            </Pager>
          </HeadRow>
          <TableHead>
            <CheckCell><AwsCheck /></CheckCell>
            <HeadCell $first>
              <span>Name <Pencil size={14} /></span><Filter size={11} strokeWidth={2.4} />
            </HeadCell>
            <HeadCell>Instance ID</HeadCell>
            <HeadCell>Instance state<Filter size={11} strokeWidth={2.4} /></HeadCell>
            <HeadCell>Instance type<Filter size={11} strokeWidth={2.4} /></HeadCell>
            <HeadCell>Status check</HeadCell>
            <HeadCell>Alarm status</HeadCell>
            <HeadCell>Availability Zone<Filter size={11} strokeWidth={2.4} /></HeadCell>
            <HeadCell>Public IPv4 DNS<Filter size={11} strokeWidth={2.4} /></HeadCell>
            <HeadCell>Public IPv4 ...<Filter size={11} strokeWidth={2.4} /></HeadCell>
            <HeadCell>Elastic IP</HeadCell>
            <HeadCell>I</HeadCell>
          </TableHead>
          {instances.map((row) => (
            <BodyRow key={row.id}>
              <CheckCell><AwsCheck /></CheckCell>
              <BodyCell />
              <BodyCell><IdLink>{row.id}</IdLink></BodyCell>
              <BodyCell $gap={6}>
                {row.state === "Running" && <CircleCheck size={15} color="#1d8102" />}
                {row.state === "Stopping" && <Clock size={15} color="#545b64" />}
                {(row.state === "Stopped" || row.state === "Terminated") && <CircleMinus size={15} color="#545b64" />}
                <StateLabel $state={row.state}>{row.state}</StateLabel>
                <ZoomIn size={15} />
                <ZoomOut size={15} />
              </BodyCell>
              <BodyCell>t2.micro</BodyCell>
              <BodyCell $gap={4}>
                {row.check === "Initializing" && <Clock size={15} />}
                <CheckLabel $muted={row.check !== "–"}>{row.check}</CheckLabel>
              </BodyCell>
              <BodyCell $gap={14}>No alarms<Plus size={17} /></BodyCell>
              <BodyCell>us-east-{row.az}</BodyCell>
              <BodyCell>{row.dns}</BodyCell>
              <BodyCell>{row.ip}</BodyCell>
              <BodyCell>–</BodyCell>
              <BodyCell>–</BodyCell>
            </BodyRow>
          ))}
          <HScroll>◀<HThumb /><HArrowRight>▶</HArrowRight></HScroll>
          <GrayZone />
          <DetailZone>
            <SelectTitle>Select an instance</SelectTitle>
            <DetailTools>
              <Settings size={17} />
              <NavSep $margin="0 10px 0 8px" $color="#eaeded" />
              <X size={18} />
            </DetailTools>
          </DetailZone>
          <BottomEdge />
        </AwsMain>
      </AwsBody>
    </WindowFrame>
  );
}

function ClockWindow() {
  return (
    <ClockFrame $left={2525} $top={493} $width={727} $height={501}>
      <Rail>
        <RailItem><Menu size={19} strokeWidth={1.2} /></RailItem>
        <RailItem><Clock size={18} strokeWidth={1.2} /></RailItem>
        <RailItem><Hourglass size={18} strokeWidth={1.2} /></RailItem>
        <RailItem><Bell size={18} strokeWidth={1.2} /></RailItem>
        <RailItem $active><Timer size={18} strokeWidth={1.2} /></RailItem>
        <RailItem><Globe size={18} strokeWidth={1.2} /></RailItem>
        <RailSpacer />
        <RailItem><Avatar>BF</Avatar></RailItem>
        <RailItem><Settings size={18} strokeWidth={1.2} /></RailItem>
      </Rail>
      <ClockMain>
        <ClockHead>
          <ClockApp />
          <span>Clock</span>
          <ClockHeadControls>
            <Minus size={16} strokeWidth={1.2} />
            <Square size={14} strokeWidth={1.2} />
            <X size={16} strokeWidth={1.2} />
          </ClockHeadControls>
        </ClockHead>
        <ExpandRow><ExpandIcon /><PipIcon /></ExpandRow>
        <TimeRow>
          <TimeMain>00:03:32</TimeMain>
          <TimeFrac>.49</TimeFrac>
        </TimeRow>
        <UnitRow><span>hr</span><span>min</span><span>sec</span></UnitRow>
        <ControlRow>
          <RoundButton $primary><Pause size={26} fill="#fff" strokeWidth={1.5} /></RoundButton>
          <RoundButton><Flag size={22} fill="#1b1b1b" strokeWidth={1.4} /></RoundButton>
          <RoundButton><RotateCcw size={22} strokeWidth={1.2} /></RoundButton>
        </ControlRow>
      </ClockMain>
    </ClockFrame>
  );
}

export default function App() {
  return (
    <Desktop>
      <GlobalStyle />
      <WordWindow />
      <JMeterWindow />
      <BrowserWindow />
      <ClockWindow />
    </Desktop>
  );
}
